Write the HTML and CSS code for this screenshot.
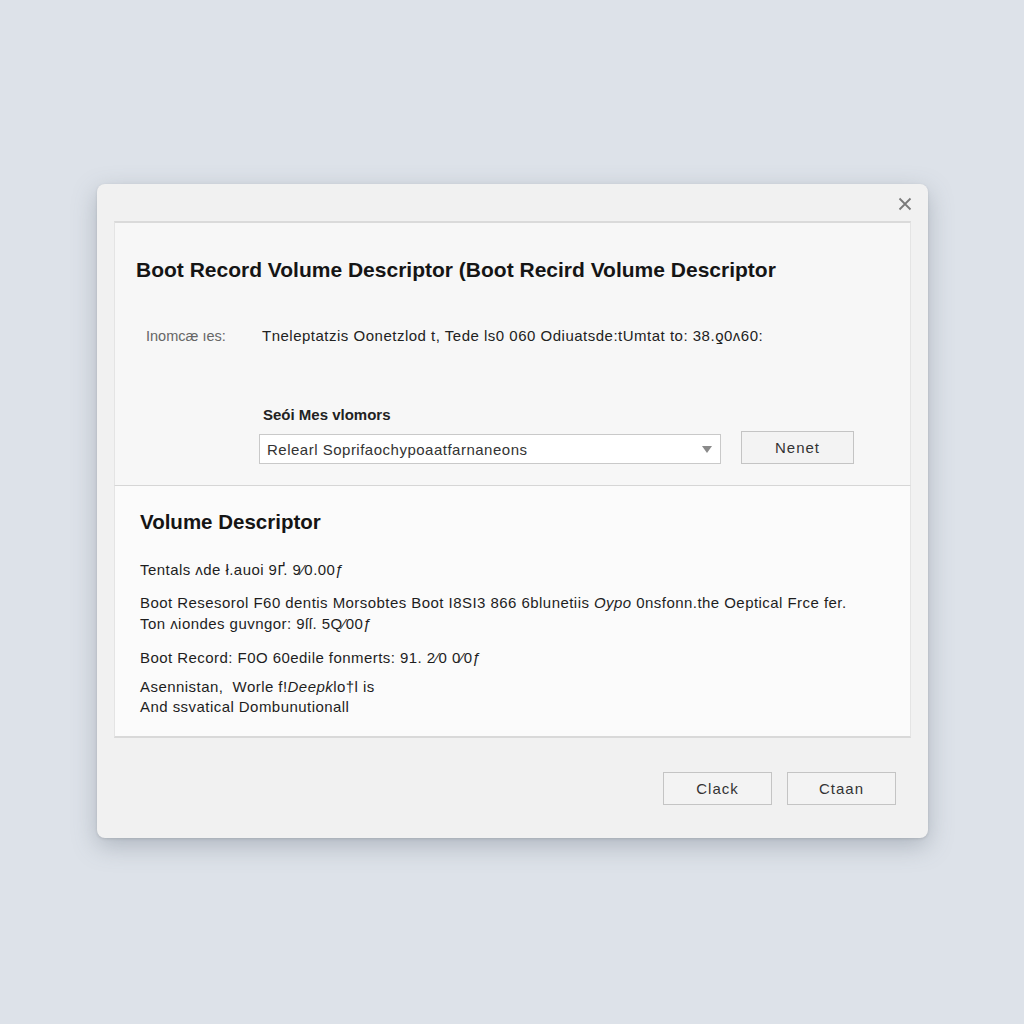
FILE: index.html
```html
<!DOCTYPE html>
<html>
<head>
<meta charset="utf-8">
<link rel="stylesheet" href="styles.css">
</head>
<body>
<div class="dialog">
  <div class="titlebar">
    <svg class="close" width="14" height="14" viewBox="0 0 14 14"><path d="M1.5 1.5 L12.5 12.5 M12.5 1.5 L1.5 12.5" stroke="#7a7a7a" stroke-width="1.8" fill="none"/></svg>
  </div>
  <div class="panel top">
    <h1 class="title">Boot Record Volume Descriptor (Boot Recird Volume Descriptor</h1>
    <div class="row">
      <span class="label">Inomcæ ıes:</span>
      <span class="value">Tneleptatzis Oonetzlod t, Tede ls0 060 Odiuatsde:tUmtat to: 38.ƍ0ʌ60:</span>
    </div>
    <div class="field">
      <div class="field-label">Seói Mes vlomors</div>
      <div class="field-row">
        <div class="select">
          <span>Relearl Soprifaochypoaatfarnaneons</span>
          <svg width="10" height="7" viewBox="0 0 10 7"><path d="M0 0 L10 0 L5 7 Z" fill="#8a8a8a"/></svg>
        </div>
        <div class="btn small">Nenet</div>
      </div>
    </div>
  </div>
  <div class="panel bottom">
    <h2 class="subtitle">Volume Descriptor</h2>
    <p class="line l1">Tentals ʌde ł.auoi 9Ґ. 9⁄0.00ƒ</p>
    <p class="line l2">Boot Resesorol F60 dentis Morsobtes Boot I8SI3 866 6blunetiis <i>Oypo</i> 0nsfonn.the Oeptical Frce fer.</p>
    <p class="line l3">Ton ʌiondes guvngor: 9ſſ. 5Q⁄00ƒ</p>
    <p class="line l4">Boot Record: F0O 60edile fonmerts: 91. 2⁄0 0⁄0ƒ</p>
    <p class="line l5">Asennistan,&nbsp; Worle f!<i>Deepk</i>lo†l is</p>
    <p class="line l6">And ssvatical Dombunutionall</p>
  </div>
  <div class="footer">
    <div class="btn">Clack</div>
    <div class="btn">Ctaan</div>
  </div>
</div>
</body>
</html>
```

FILE: styles.css
```css
html, body {
  margin: 0;
  padding: 0;
}
body {
  width: 1024px;
  height: 1024px;
  background: #dde2e9;
  font-family: "Liberation Sans", Arial, sans-serif;
  color: #1c1c1c;
  display: flex;
  flex-direction: column;
  align-items: flex-start;
}
.dialog {
  margin: 184px 0 0 97px;
  width: 831px;
  height: 654px;
  background: #f1f1f1;
  border-radius: 8px;
  box-shadow: 0 8px 24px rgba(90, 100, 115, 0.35), 0 1px 3px rgba(0,0,0,0.12);
  display: flex;
  flex-direction: column;
  align-items: center;
}
.titlebar {
  width: 100%;
  height: 37px;
  display: flex;
  justify-content: flex-end;
  align-items: flex-start;
  box-sizing: border-box;
  padding: 13px 16px 0 0;
}
.panel {
  width: 797px;
  box-sizing: border-box;
  background: #f7f7f7;
}
.panel.top {
  height: 264px;
  border-top: 2px solid #dadada;
  border-left: 1px solid #e4e4e4;
  border-right: 1px solid #e4e4e4;
  padding: 35px 0 0 21px;
}
.title {
  margin: 0;
  font-size: 21px;
  font-weight: bold;
  letter-spacing: 0;
  color: #151515;
  line-height: 24px;
}
.row {
  display: flex;
  margin-top: 45px;
  font-size: 15px;
  line-height: 18px;
}
.label {
  width: 126px;
  padding-left: 10px;
  color: #666;
  font-size: 14.5px;
  box-sizing: border-box;
}
.value {
  color: #222;
  letter-spacing: 0.5px;
}
.field {
  margin-top: 61px;
  padding-left: 123px;
}
.field-label {
  font-size: 15px;
  font-weight: bold;
  color: #222;
  padding-left: 4px;
  line-height: 18px;
}
.field-row {
  display: flex;
  align-items: center;
  margin-top: 10px;
  gap: 20px;
}
.select {
  width: 462px;
  height: 30px;
  box-sizing: border-box;
  background: #fff;
  border: 1px solid #c9c9c9;
  display: flex;
  align-items: center;
  justify-content: space-between;
  padding: 0 8px 0 7px;
  font-size: 15px;
  letter-spacing: 0.5px;
  color: #333;
}
.btn {
  width: 109px;
  height: 33px;
  box-sizing: border-box;
  border: 1.5px solid #c4c4c4;
  background: #f3f3f3;
  display: flex;
  align-items: center;
  justify-content: center;
  font-size: 15px;
  color: #333;
  letter-spacing: 1px;
}
.btn.small {
  width: 113px;
  height: 33px;
  margin-top: -3px;
}
.panel.bottom {
  height: 253px;
  background: #fbfbfb;
  border-top: 1px solid #d6d6d6;
  border-bottom: 2px solid #d9d9d9;
  border-left: 1px solid #e4e4e4;
  border-right: 1px solid #e4e4e4;
  padding: 24px 0 0 25px;
}
.subtitle {
  margin: 0;
  font-size: 20.5px;
  font-weight: bold;
  line-height: 24px;
  color: #151515;
}
.line {
  margin: 0;
  font-size: 15px;
  line-height: 18px;
  color: #1e1e1e;
  letter-spacing: 0.45px;
}
.l1 { margin-top: 27px; }
.l2 { margin-top: 15px; }
.l3 { margin-top: 3px; }
.l4 { margin-top: 16px; }
.l5 { margin-top: 11px; }
.l6 { margin-top: 2px; }
.footer {
  width: 100%;
  display: flex;
  justify-content: flex-end;
  gap: 15px;
  box-sizing: border-box;
  padding: 34px 32px 0 0;
}
```
